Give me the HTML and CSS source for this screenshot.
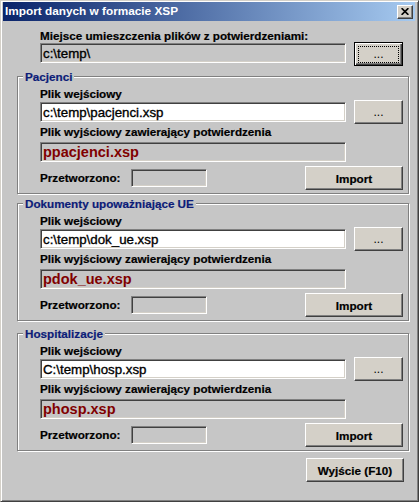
FILE: index.html
```html
<!DOCTYPE html>
<html lang="pl">
<head>
<meta charset="utf-8">
<title>Import danych w formacie XSP</title>
<link rel="stylesheet" href="styles.css">
</head>
<body>
<div class="window">
  <div class="titlebar">
    <span class="title">Import danych w formacie XSP</span>
    <button class="close" aria-label="Zamknij">
      <svg width="8" height="7" viewBox="0 0 8 7"><path d="M0.6 0.2 L7.4 6.8 M7.4 0.2 L0.6 6.8" stroke="#000" stroke-width="1.7" fill="none"/></svg>
    </button>
  </div>
  <div class="client">
    <div class="top">
      <div class="label">Miejsce umieszczenia plików z potwierdzeniami:</div>
      <div class="row row-top">
        <div class="field field-ro field-dir">c:\temp\</div>
        <button class="btn btn-browse btn-default"><span class="focus">...</span></button>
      </div>
    </div>

    <fieldset class="group group-1">
      <legend>Pacjenci</legend>
      <div class="group-body">
        <div class="label">Plik wejściowy</div>
        <div class="row">
          <div class="field field-edit">c:\temp\pacjenci.xsp</div>
          <button class="btn btn-browse">...</button>
        </div>
        <div class="label label-out">Plik wyjściowy zawierający potwierdzenia</div>
        <div class="field field-ro field-out">ppacjenci.xsp</div>
        <div class="row row-bottom">
          <div class="label label-count">Przetworzono:</div>
          <div class="field field-ro field-count"></div>
          <button class="btn btn-import">Import</button>
        </div>
      </div>
    </fieldset>

    <fieldset class="group group-2">
      <legend>Dokumenty upoważniające UE</legend>
      <div class="group-body">
        <div class="label">Plik wejściowy</div>
        <div class="row">
          <div class="field field-edit">c:\temp\dok_ue.xsp</div>
          <button class="btn btn-browse">...</button>
        </div>
        <div class="label label-out">Plik wyjściowy zawierający potwierdzenia</div>
        <div class="field field-ro field-out">pdok_ue.xsp</div>
        <div class="row row-bottom">
          <div class="label label-count">Przetworzono:</div>
          <div class="field field-ro field-count"></div>
          <button class="btn btn-import">Import</button>
        </div>
      </div>
    </fieldset>

    <fieldset class="group group-3">
      <legend>Hospitalizacje</legend>
      <div class="group-body">
        <div class="label">Plik wejściowy</div>
        <div class="row">
          <div class="field field-edit">C:\temp\hosp.xsp</div>
          <button class="btn btn-browse">...</button>
        </div>
        <div class="label label-out">Plik wyjściowy zawierający potwierdzenia</div>
        <div class="field field-ro field-out">phosp.xsp</div>
        <div class="row row-bottom">
          <div class="label label-count">Przetworzono:</div>
          <div class="field field-ro field-count"></div>
          <button class="btn btn-import">Import</button>
        </div>
      </div>
    </fieldset>

    <div class="footer">
      <button class="btn btn-exit">Wyjście (F10)</button>
    </div>
  </div>
</div>
</body>
</html>
```

FILE: styles.css
```css
html, body {
  margin: 0;
  padding: 0;
  background: #c6c6c6;
}

body {
  font-family: "Liberation Sans", Arial, sans-serif;
  color: #000;
}

.window {
  width: 419px;
  height: 502px;
  box-sizing: border-box;
  background: #c6c6c6;
  border: 1px solid;
  border-color: #d4d0c8 #404040 #404040 #d4d0c8;
  box-shadow: inset 1px 1px 0 #fff, inset -1px -1px 0 #808080;
  padding: 1px 3px 2px 2px;
  display: flex;
  flex-direction: column;
}

.titlebar {
  height: 19px;
  flex: none;
  display: flex;
  align-items: center;
  justify-content: space-between;
  padding: 0 2px 0 2px;
  background: linear-gradient(to right, #0a246a, #a6caf0);
}

.title {
  color: #fff;
  font-weight: bold;
  font-size: 11.8px;
  line-height: 13px;
  white-space: nowrap;
}

.close {
  width: 16px;
  height: 14px;
  padding: 0;
  box-sizing: border-box;
  background: #d4d0c8;
  border: 1px solid;
  border-color: #fff #404040 #404040 #fff;
  box-shadow: inset -1px -1px 0 #808080;
  display: flex;
  align-items: center;
  justify-content: center;
}

.client {
  flex: 1;
  display: flex;
  flex-direction: column;
}

.top {
  padding: 9px 0 0 37px;
}

.label {
  font-weight: bold;
  font-size: 11.7px;
  line-height: 12px;
  white-space: nowrap;
  -webkit-text-stroke: 0.2px #000;
}

.row {
  display: flex;
  align-items: center;
  justify-content: space-between;
  width: 363px;
}

.row-top {
  align-items: flex-start;
}

.row-top .field {
  margin-top: 1px;
}

.field {
  box-sizing: border-box;
  width: 306px;
  height: 20px;
  border: 1px solid;
  border-color: #808080 #fff #fff #808080;
  box-shadow: inset 1px 1px 0 #404040, inset -1px -1px 0 #d4d0c8;
  padding: 0 2px;
  display: flex;
  align-items: center;
  font-size: 13.3px;
  white-space: nowrap;
  overflow: hidden;
}

.field-edit,
.field-dir {
  -webkit-text-stroke: 0.35px #000;
}

.field-edit {
  background: #fff;
}

.field-ro {
  background: #c6c6c6;
}

.field-out {
  margin-top: 4px;
  color: #800000;
  font-weight: bold;
  font-size: 14.5px;
}

.field-count {
  width: 76px;
  height: 18px;
}

.btn {
  box-sizing: border-box;
  padding: 0;
  font-family: "Liberation Sans", Arial, sans-serif;
  font-weight: bold;
  font-size: 11.7px;
  color: #000;
  background: #d4d0c8;
  border: 1px solid;
  border-color: #fff #404040 #404040 #fff;
  box-shadow: inset -1px -1px 0 #808080;
  display: flex;
  align-items: center;
  justify-content: center;
}

.btn-browse {
  width: 49px;
  height: 24px;
  font-weight: normal;
  font-size: 12px;
}

.btn-default {
  border-color: #000;
  box-shadow: inset 1px 1px 0 #fff, inset -1px -1px 0 #404040, inset -2px -2px 0 #808080;
}

.focus {
  box-sizing: border-box;
  width: 41px;
  height: 17px;
  border: 1px dotted #000;
  display: flex;
  align-items: center;
  justify-content: center;
}

.btn-import,
.btn-exit {
  width: 98px;
  height: 24px;
  -webkit-text-stroke: 0.2px #000;
}

.group {
  box-sizing: border-box;
  width: 392px;
  min-width: 0;
  margin: 4px 0 0 14px;
  padding: 0;
  border: 1px solid #808080;
  box-shadow: inset 1px 1px 0 #fff, 1px 1px 0 #fff;
}

.group-2 {
  margin-top: 3px;
}

.group-3 {
  margin-top: 6px;
}

.group legend {
  margin-left: 5px;
  padding: 0 2px;
  background: #c6c6c6;
  color: #0c1c78;
  font-weight: bold;
  font-size: 11.7px;
  line-height: 13px;
  white-space: nowrap;
  -webkit-text-stroke: 0.2px #0c1c78;
}

.group-body {
  padding: 5px 5px 3px 22px;
}

.label-out {
  margin-top: 2px;
}

.row-bottom {
  margin-top: 4px;
  justify-content: flex-start;
}

.label-count {
  width: 91px;
}

.row-bottom .btn-import {
  margin-left: auto;
}

.footer {
  display: flex;
  justify-content: flex-end;
  margin-top: 7px;
  padding-right: 11px;
}
```
